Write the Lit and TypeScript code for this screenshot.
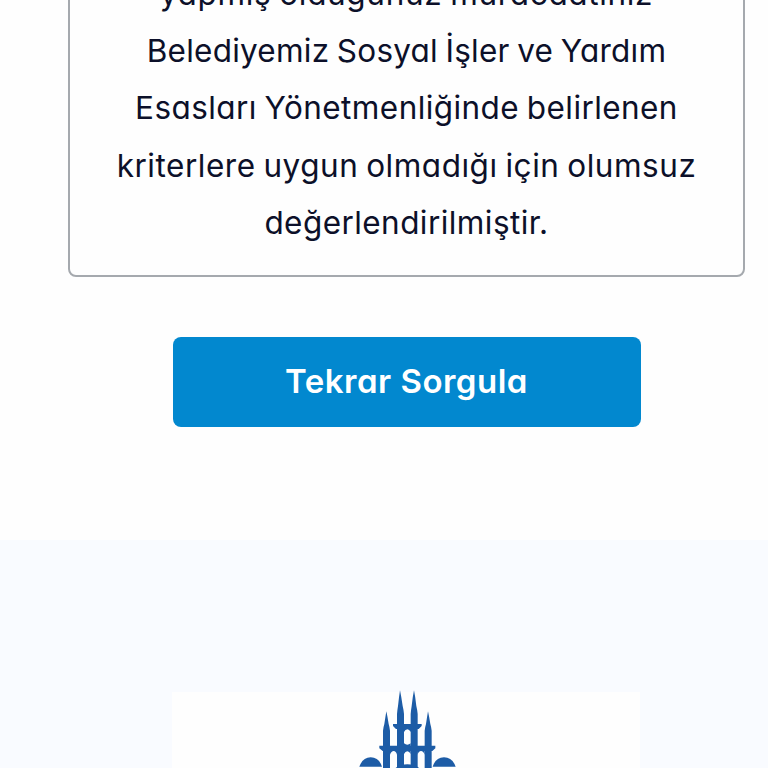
import {LitElement, html, css} from 'lit';
import {customElement, property} from 'lit/decorators.js';
import {styleMap} from 'lit/directives/style-map.js';

// text and tracking (px) of every line of the answer
const ANSWER_LINES = [
  {text: 'yapmış olduğunuz müracaatınız', tracking: 0.66},
  {text: 'Belediyemiz Sosyal İşler ve Yardım', tracking: 0.23},
  {text: 'Esasları Yönetmenliğinde belirlenen', tracking: 0.42},
  {text: 'kriterlere uygun olmadığı için olumsuz', tracking: 0.52},
  {text: 'değerlendirilmiştir.', tracking: 0.43},
];

@customElement('answer-box')
class AnswerBox extends LitElement {

  @property({attribute: false}) lines = ANSWER_LINES;

  static styles = css`
    :host {
      display: block;
      box-sizing: border-box;
      border: 2px solid #a5a9ae;
      border-radius: 8px;
      padding: 24px 0;
      text-align: center;
      color: #0c1029;
      font-size: 31.5px;
      line-height: 57.2px;
      word-spacing: -1.5px;
    }

    p {
      margin: 0;
    }

    .line {
      display: block;
      white-space: nowrap;
    }
  `

  render() {
    return html`
      <p>
        ${this.lines.map(line => html`
          <span class="line" style=${styleMap({letterSpacing: `${line.tracking}px`})}>${line.text}</span>
        `)}
      </p>
    `
  }
}

@customElement('city-logo')
class CityLogo extends LitElement {

  static styles = css`
    :host {
      display: block;
      margin-left: 4px;
    }

    svg {
      display: block;
      width: 136px;
      height: 76px;
      overflow: visible;
      fill: #1d5ca6;
    }
  `

  render() {
    return html`
      <svg viewBox="0 36 408 228" aria-hidden="true">
        <!-- minarets -->
        <path d="M180 31 Q184 50 188 78 Q191 90 192 102 V270 H171 V102 Q172 90 174 78 Q177 50 180 31Z"/>
        <path d="M222 31 Q226 50 229 78 Q232 90 233 102 V270 H212 V102 Q213 90 215 78 Q218 50 222 31Z"/>
        <path d="M139 94 Q143 112 146 132 Q149 142 150 152 V270 H129 V152 Q130 142 133 132 Q136 112 139 94Z"/>
        <path d="M264 94 Q268 112 271 132 Q274 142 275 152 V270 H254 V152 Q255 142 258 132 Q261 112 264 94Z"/>
        <!-- balconies -->
        <path d="M159 132 H245 V138 L236 147 H216 Q213 147 212 156 Q208 148 202 148 Q196 148 192 156 L190 147 H168 L159 138Z"/>
        <path d="M118 197 H286 V205 L277 213 H254 V224 Q250 213 243 213 Q236 213 233 224 L231 213 H212 V222 Q208 214 202 214 Q196 214 192 222 V213 H171 V224 Q168 213 161 213 Q154 213 150 224 V213 H128 L118 205Z"/>
        <path d="M192 190 Q202 198 212 190 V199 H192Z"/>
        <!-- domes -->
        <path d="M160 270 Q176 253 202 253 Q228 253 244 270Z"/>
        <path d="M58 260 Q68 232 92 232 Q117 232 126 260Z"/>
        <path d="M278 260 Q287 232 312 232 Q337 232 347 260Z"/>
      </svg>
    `
  }
}

@customElement('app-root')
class AppRoot extends LitElement {

  static styles = css`
    :host {
      display: flex;
      flex-direction: column;
      height: 768px;
      overflow: hidden;
      background-color: #fefefe;
      font-family: Inter, "Noto Sans", sans-serif;
      font-feature-settings: "cv11";
    }

    .result {
      flex: none;
      box-sizing: border-box;
      height: 540px;
      padding: 0 23px 113px 68px;
      display: flex;
      flex-direction: column;
      justify-content: flex-end;
      gap: 60px;
      overflow: hidden;
    }

    .result > * {
      flex: none;
    }

    .button {
      align-self: center;
      width: 468px;
      height: 90px;
      padding: 0 0 2px;
      border: none;
      border-radius: 8px;
      background-color: #0288cf;
      color: #fff;
      font-family: inherit;
      font-feature-settings: inherit;
      font-size: 33px;
      font-weight: 600;
      letter-spacing: .5px;
      cursor: pointer;
    }

    footer {
      flex: 1;
      min-height: 0;
      padding: 152px 128px 0 172px;
      background-color: #f9fbff;
      overflow: hidden;
    }

    .card {
      display: flex;
      justify-content: center;
      height: 200px;
      background-color: #fefefe;
    }
  `

  render() {
    return html`
      <section class="result">
        <answer-box></answer-box>
        <button class="button" type="button">Tekrar Sorgula</button>
      </section>
      <footer>
        <div class="card"><city-logo></city-logo></div>
      </footer>
    `
  }
}
